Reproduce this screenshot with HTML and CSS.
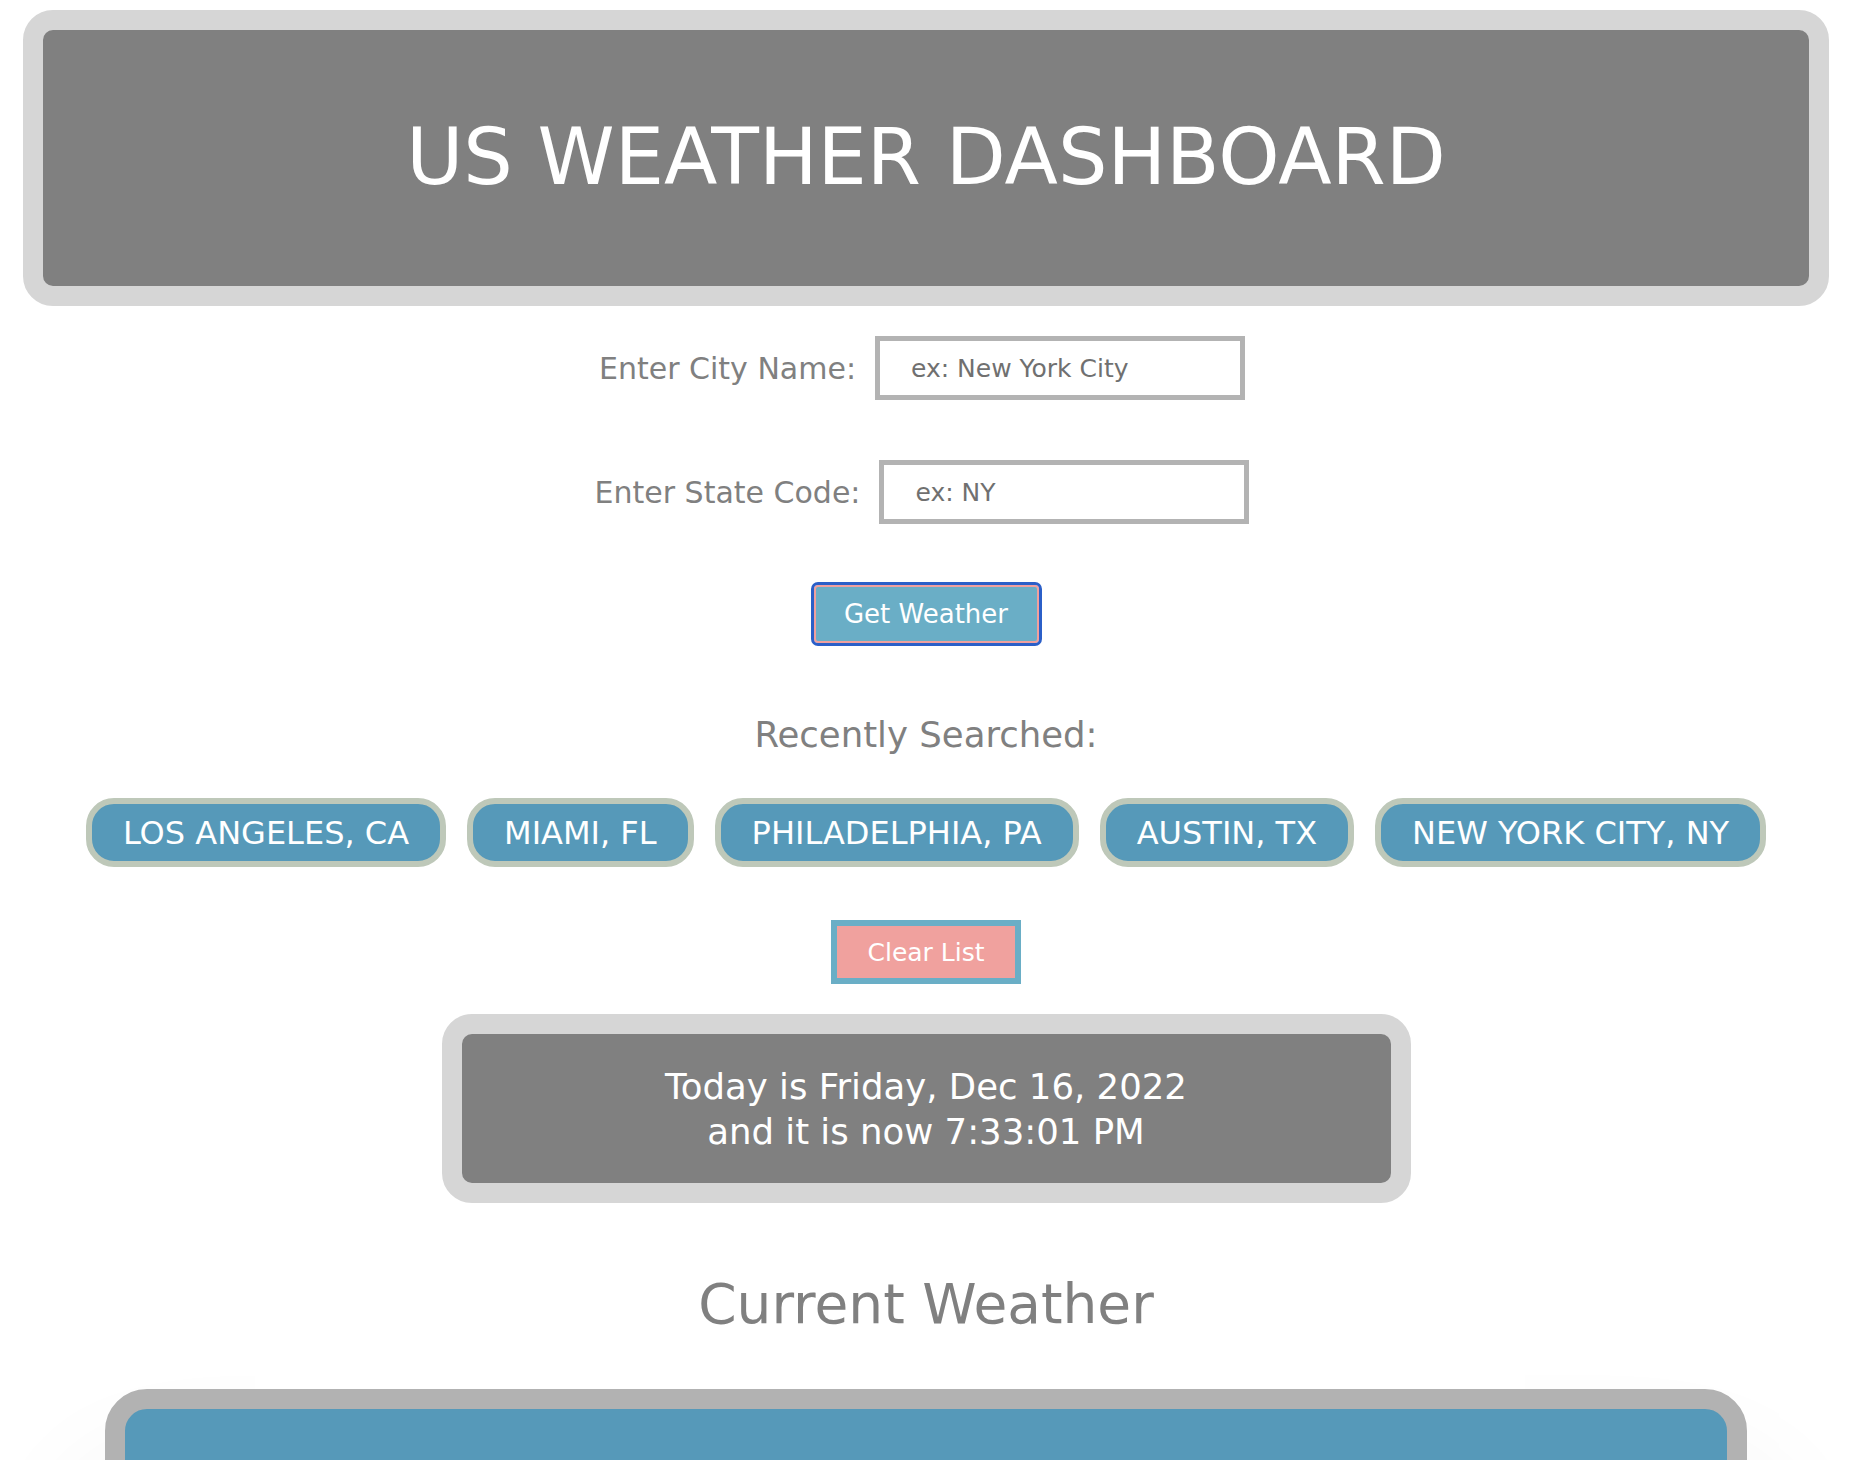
FILE: index.html
```html
<!DOCTYPE html>
<html lang="en">
<head>
<meta charset="utf-8">
<title>US Weather Dashboard</title>
<link rel="stylesheet" href="styles.css">
</head>
<body>
<header class="banner">
  <h1 class="banner-title">US WEATHER DASHBOARD</h1>
</header>

<form class="search">
  <div class="field">
    <label class="field-label" for="city">Enter City Name:</label>
    <input class="field-input" id="city" type="text" placeholder="ex: New York City">
  </div>
  <div class="field">
    <label class="field-label" for="state">Enter State Code:</label>
    <input class="field-input" id="state" type="text" placeholder="ex: NY">
  </div>
  <button class="btn-get" type="button">Get Weather</button>
</form>

<section class="recent">
  <h2 class="recent-title">Recently Searched:</h2>
  <div class="chips">
    <button class="chip" type="button">LOS ANGELES, CA</button>
    <button class="chip" type="button">MIAMI, FL</button>
    <button class="chip" type="button">PHILADELPHIA, PA</button>
    <button class="chip" type="button">AUSTIN, TX</button>
    <button class="chip" type="button">NEW YORK CITY, NY</button>
  </div>
  <button class="btn-clear" type="button">Clear List</button>
</section>

<div class="clock">
  <p class="clock-text">Today is Friday, Dec 16, 2022<br>and it is now 7:33:01 PM</p>
</div>

<h2 class="current-title">Current Weather</h2>
<section class="current-card"></section>
</body>
</html>
```

FILE: styles.css
```css
html, body {
  margin: 0;
  padding: 0;
  background: #ffffff;
}

body {
  font-family: "DejaVu Sans", "Open Sans", sans-serif;
  color: #808080;
  padding-top: 10px;
}

.banner {
  box-sizing: border-box;
  width: calc(100% - 46px);
  margin: 0 auto;
  height: 296px;
  border: 20px solid #d6d6d6;
  border-radius: 30px;
  background: #808080;
  display: flex;
  align-items: center;
  justify-content: center;
}

.banner-title {
  margin: 0;
  color: #ffffff;
  font-size: 78px;
  font-weight: 400;
  line-height: 1;
  padding-bottom: 2px;
}

.search {
  display: flex;
  flex-direction: column;
  align-items: center;
  margin-top: 30px;
}

.field {
  display: flex;
  align-items: center;
  gap: 19px;
  margin: 0 8px 60px 0;
}

.field-label {
  font-size: 30px;
  color: #808080;
}

.field-input {
  box-sizing: border-box;
  width: 370px;
  height: 64px;
  border: 5px solid #b3b3b3;
  padding: 0 0 0 31px;
  font-family: inherit;
  font-size: 25px;
  color: #555;
  background: #fff;
  outline: none;
}

.field-input::placeholder {
  color: #707070;
}

.btn-get {
  box-sizing: border-box;
  width: 225px;
  height: 58px;
  margin-top: 1px;
  background: #6aaec6;
  color: #ffffff;
  font-family: inherit;
  font-size: 26px;
  border: 2px solid #f0a09e;
  border-radius: 4px;
  outline: 3px solid #2b5fc8;
  outline-offset: 0;
  cursor: pointer;
}

.recent {
  display: flex;
  flex-direction: column;
  align-items: center;
}

.recent-title {
  margin: 69px 0 0;
  font-size: 35.5px;
  font-weight: 400;
  line-height: 1.3;
  color: #808080;
}

.chips {
  display: flex;
  justify-content: center;
  gap: 21px;
  margin-top: 40px;
}

.chip {
  box-sizing: border-box;
  height: 69px;
  padding: 0 31px;
  border: 6px solid #bec8b9;
  border-radius: 28px;
  background: #5699b9;
  color: #ffffff;
  font-family: inherit;
  font-size: 32px;
  cursor: pointer;
}

.btn-clear {
  box-sizing: border-box;
  width: 190px;
  height: 64px;
  margin-top: 53px;
  border: 6px solid #6aaec6;
  background: #f0a19e;
  color: #ffffff;
  font-family: inherit;
  font-size: 25px;
  cursor: pointer;
}

.clock {
  box-sizing: border-box;
  width: calc(50% + 43px);
  margin: 30px auto 0;
  height: 189px;
  border: 20px solid #d6d6d6;
  border-radius: 30px;
  background: #808080;
  display: flex;
  align-items: center;
  justify-content: center;
}

.clock-text {
  margin: 0;
  color: #ffffff;
  font-size: 35.5px;
  line-height: 45px;
  text-align: center;
}

.current-title {
  margin: 66px 0 0;
  text-align: center;
  font-size: 55px;
  font-weight: 400;
  line-height: 1.3;
  color: #808080;
}

.current-card {
  box-sizing: border-box;
  width: calc(100% - 210px);
  margin: 48px auto 0;
  height: 420px;
  border: 20px solid #b2b2b2;
  border-radius: 42px;
  background: #5699b9;
  box-shadow: 0 110px 140px rgba(0, 0, 0, 0.12);
}
```
